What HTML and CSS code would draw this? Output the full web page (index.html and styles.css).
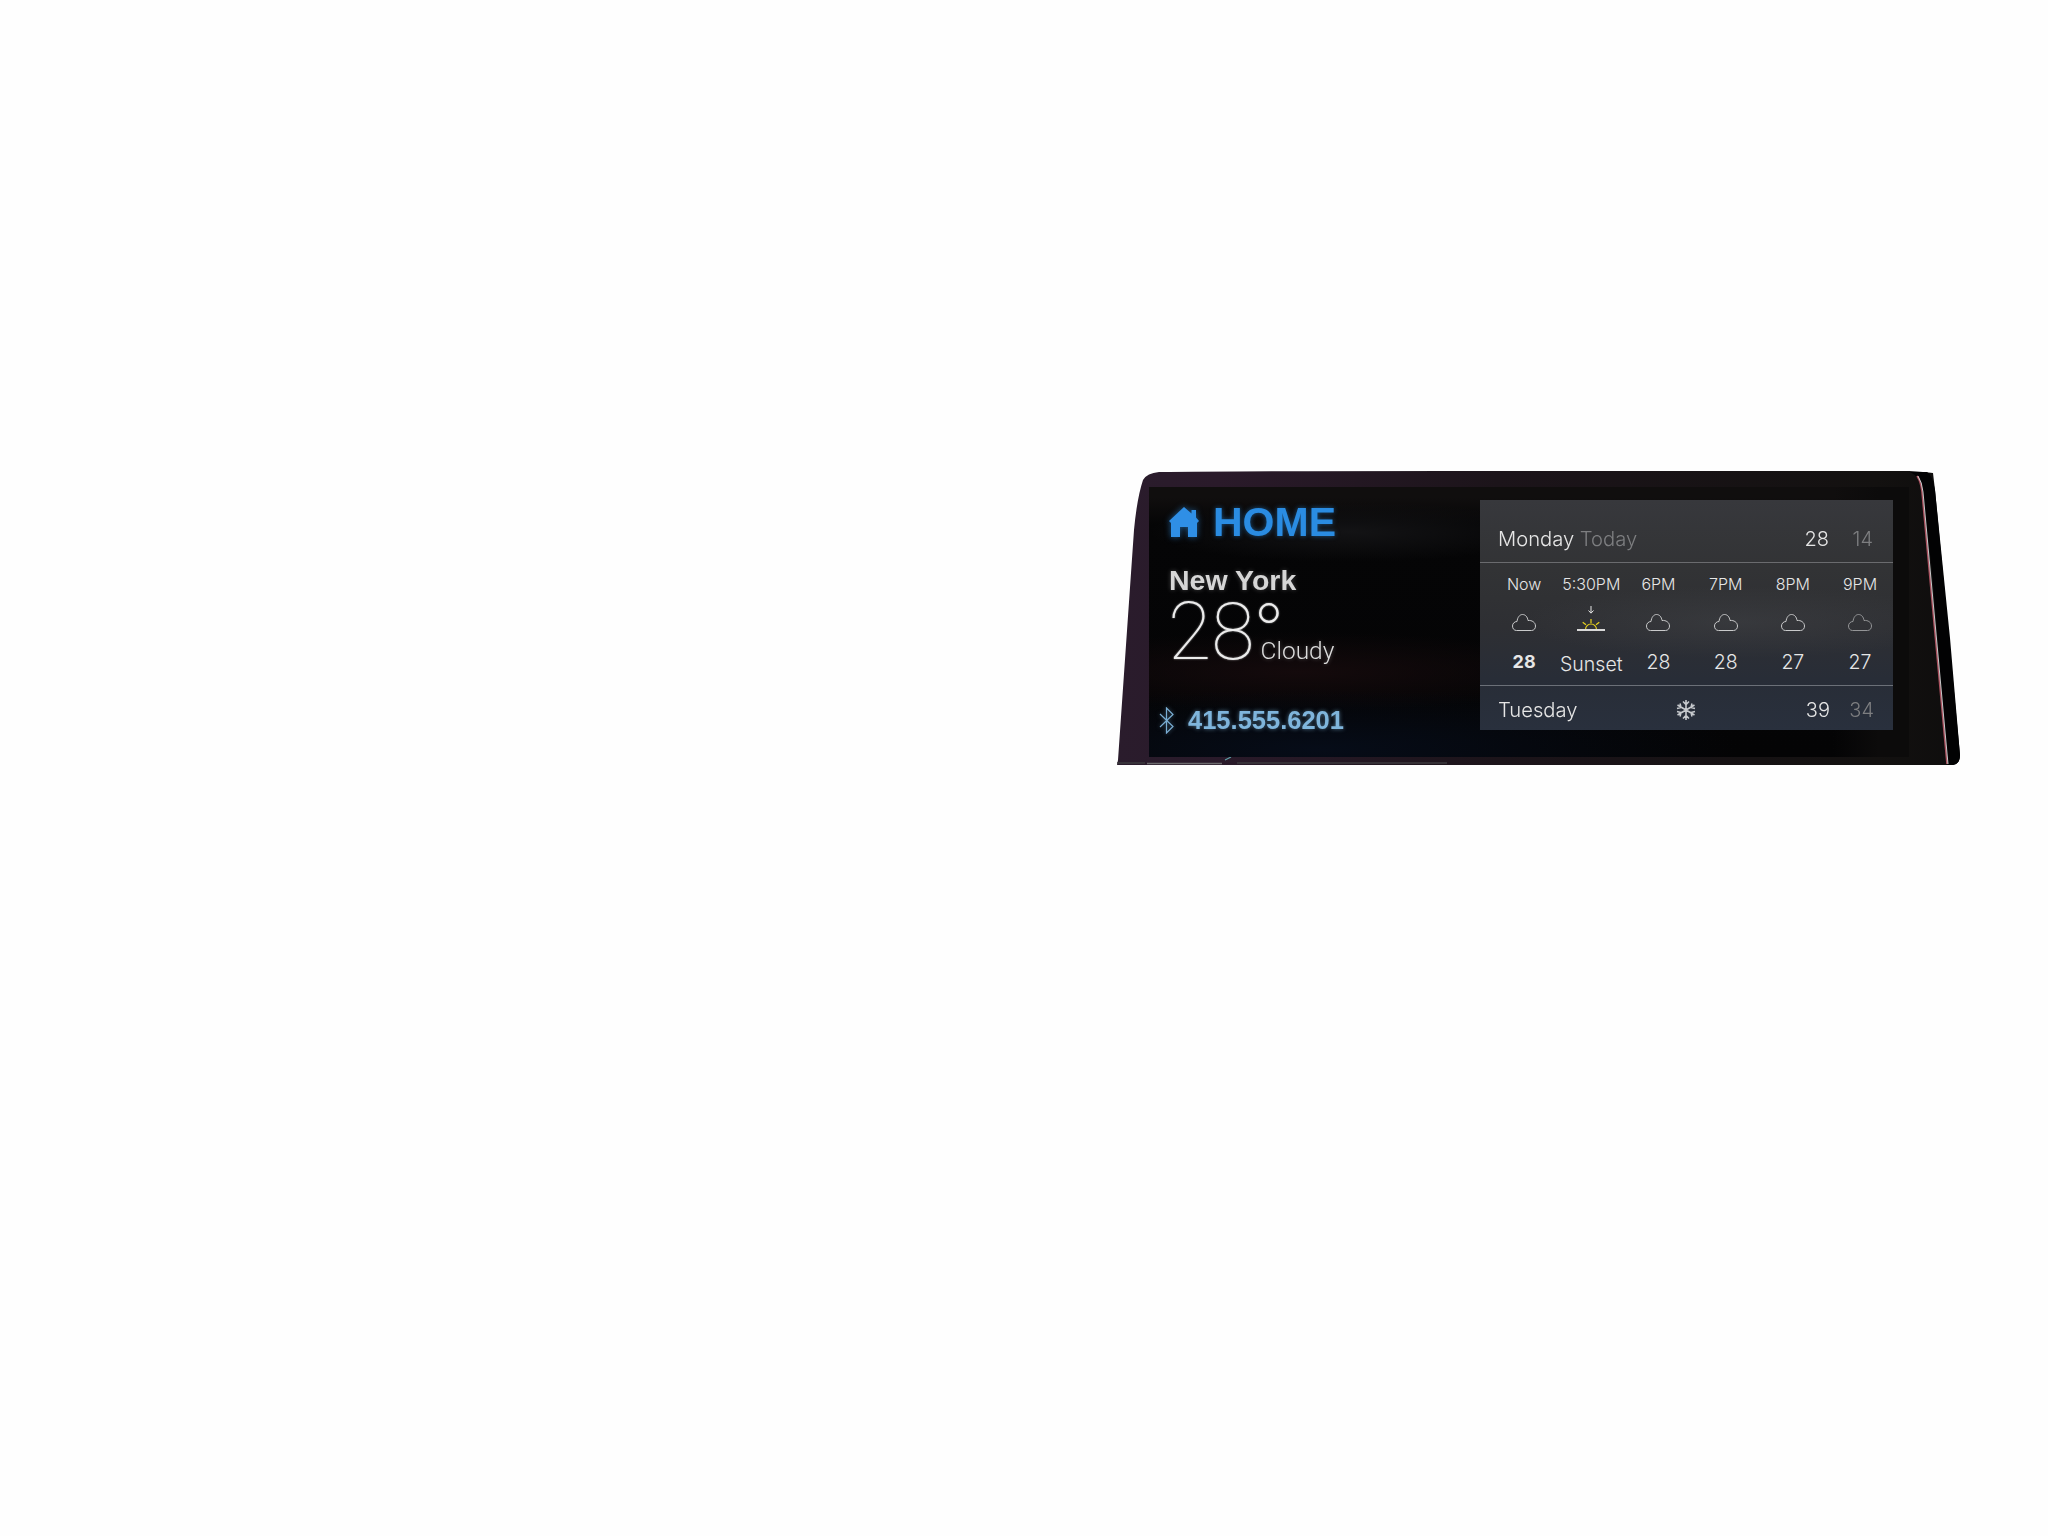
FILE: index.html
```html
<!DOCTYPE html>
<html lang="en">
<head>
<meta charset="utf-8">
<title>Home</title>
<link rel="stylesheet" href="styles.css">
</head>
<body>
<main class="device">
  <svg class="bezel" width="844" height="295" viewBox="0 0 844 295">
    <defs>
      <linearGradient id="frame" x1="0" y1="0" x2="1" y2="0">
        <stop offset="0" stop-color="#2a1c2c"/>
        <stop offset="0.12" stop-color="#2a1a2a"/>
        <stop offset="0.45" stop-color="#1c141a"/>
        <stop offset="0.9" stop-color="#131110"/>
        <stop offset="1" stop-color="#0e0d0d"/>
      </linearGradient>
    </defs>
    <path d="M0 295 L1 290 L17 60 Q20 28 26 10 Q30 3 42 2 Q120 1 330 1 L792 1 Q808 2 816 3 L818 20 L843 285 Q843 294 836 295 Z" fill="url(#frame)"/>
    <path d="M793 2 L810 2 Q815 4 818 20 L833 168 L843 285 Q843 294 836 295 L831 295 L815 100 L805 20 Q802 6 793 2 Z" fill="#020203"/>
    <path d="M800 6 Q804 12 805 22 L830 294" fill="none" stroke="#a8505e" stroke-width="1.6"/>
    <path d="M801 6 Q805 12 806 22 L831 294" fill="none" stroke="#eef4f4" stroke-width="0.8"/>
    <path d="M30 293.5 H105" stroke="#6b6a6c" stroke-width="1.4"/>
    <path d="M108 290 L114 287" stroke="#5fa0a8" stroke-width="1.2"/>
    <path d="M0 293 H28 M120 293 H330" stroke="#3d3a3e" stroke-width="1.6"/>
  </svg>
  <div class="screen">
    <section class="status">
      <div class="home-row">
        <svg class="home-icon" width="30" height="30" viewBox="0 0 30 30">
          <path d="M15 0 L22.5 6.5 V3 H27 V10.5 L30 14 L28 16 V30 H19 V20 H11 V30 H2 V16 L0 14 Z" fill="#2f8fe6"/>
        </svg>
        <h1 class="home-title">HOME</h1>
      </div>
      <h2 class="city">New York</h2>
      <div class="weather-now">
        <span class="big-temp">28</span>
        <div class="weather-side">
          <span class="degree">°</span>
          <span class="condition">Cloudy</span>
        </div>
      </div>
      <div class="phone-row">
        <svg class="bt-icon" width="18" height="27" viewBox="0 0 18 27">
          <path d="M2 7 L15 19.5 L8.5 26 V1 L15 7.5 L2 20" fill="none" stroke="#7aaed4" stroke-width="1.2"/>
        </svg>
        <span class="phone">415.555.6201</span>
      </div>
    </section>
    <section class="panel">
      <div class="day-row day-today">
        <div class="day-name">Monday <span class="dim">Today</span></div>
        <div class="temps"><span>28</span><span class="dim">14</span></div>
      </div>
      <div class="hours">
        <div class="hour"><span class="hour-label">Now</span><svg class="cloud" width="24" height="17" viewBox="0 0 24 17"><path d="M4.5 16.5 C2 16.5 .5 14.5 .5 12 C.5 9.5 2.5 7.5 5 7.5 C5.5 3.5 7.5 .5 10.5 .5 C13.5 .5 15.5 3 16 6.5 C20 6 23.5 8.5 23.5 12 C23.5 14.5 22 16.5 19.5 16.5 Z" fill="none" stroke="#c9cacb" stroke-width="1"/></svg><span class="hour-value strong">28</span></div>
        <div class="hour"><span class="hour-label">5:30PM</span><svg class="sunset" width="28" height="26" viewBox="0 0 28 26"><path d="M14 0 V7 M11.5 4.5 L14 7.2 L16.5 4.5" fill="none" stroke="#e6e6e6" stroke-width="1"/><path d="M8.5 23.5 A5.5 5.5 0 0 1 19.5 23.5 M14 13 V17 M5.7 16.3 L9 18.7 M22.3 16.3 L19 18.7" fill="none" stroke="#e8d21d" stroke-width="1.2"/><path d="M0 24 H28" stroke="#d8d8d8" stroke-width="2"/></svg><span class="hour-value">Sunset</span></div>
        <div class="hour"><span class="hour-label">6PM</span><svg class="cloud" width="24" height="17" viewBox="0 0 24 17"><path d="M4.5 16.5 C2 16.5 .5 14.5 .5 12 C.5 9.5 2.5 7.5 5 7.5 C5.5 3.5 7.5 .5 10.5 .5 C13.5 .5 15.5 3 16 6.5 C20 6 23.5 8.5 23.5 12 C23.5 14.5 22 16.5 19.5 16.5 Z" fill="none" stroke="#c9cacb" stroke-width="1"/></svg><span class="hour-value">28</span></div>
        <div class="hour"><span class="hour-label">7PM</span><svg class="cloud" width="24" height="17" viewBox="0 0 24 17"><path d="M4.5 16.5 C2 16.5 .5 14.5 .5 12 C.5 9.5 2.5 7.5 5 7.5 C5.5 3.5 7.5 .5 10.5 .5 C13.5 .5 15.5 3 16 6.5 C20 6 23.5 8.5 23.5 12 C23.5 14.5 22 16.5 19.5 16.5 Z" fill="none" stroke="#c9cacb" stroke-width="1"/></svg><span class="hour-value">28</span></div>
        <div class="hour"><span class="hour-label">8PM</span><svg class="cloud" width="24" height="17" viewBox="0 0 24 17"><path d="M4.5 16.5 C2 16.5 .5 14.5 .5 12 C.5 9.5 2.5 7.5 5 7.5 C5.5 3.5 7.5 .5 10.5 .5 C13.5 .5 15.5 3 16 6.5 C20 6 23.5 8.5 23.5 12 C23.5 14.5 22 16.5 19.5 16.5 Z" fill="none" stroke="#c9cacb" stroke-width="1"/></svg><span class="hour-value">27</span></div>
        <div class="hour"><span class="hour-label">9PM</span><svg class="cloud cloud-dim" width="24" height="17" viewBox="0 0 24 17"><path d="M4.5 16.5 C2 16.5 .5 14.5 .5 12 C.5 9.5 2.5 7.5 5 7.5 C5.5 3.5 7.5 .5 10.5 .5 C13.5 .5 15.5 3 16 6.5 C20 6 23.5 8.5 23.5 12 C23.5 14.5 22 16.5 19.5 16.5 Z" fill="none" stroke="#c9cacb" stroke-width="1"/></svg><span class="hour-value">27</span></div>
      </div>
      <div class="day-row day-next">
        <div class="day-name">Tuesday</div>
        <svg class="snow" width="20" height="22" viewBox="0 0 20 22">
          <path d="M10 1 V21 M1.5 6 L18.5 16 M18.5 6 L1.5 16 M7 2.5 L10 5.5 L13 2.5 M7 19.5 L10 16.5 L13 19.5 M1 9.5 L5 8.5 L4 4.5 M19 9.5 L15 8.5 L16 4.5 M1 12.5 L5 13.5 L4 17.5 M19 12.5 L15 13.5 L16 17.5" fill="none" stroke="#c6c9cd" stroke-width="1.6"/>
        </svg>
        <div class="temps"><span>39</span><span class="dim">34</span></div>
      </div>
    </section>
  </div>
</main>
</body>
</html>
```
FILE: styles.css
```css
* { box-sizing: border-box; }
html, body { margin: 0; padding: 0; }
body {
  background: #fefefe;
  width: 2048px;
  height: 1536px;
  overflow: hidden;
  font-family: "Liberation Sans", Arial, sans-serif;
}
.device {
  position: relative;
  width: 844px;
  height: 295px;
  margin: 0 0 0 1117px;
  padding: 17px 0 0 32px;
  top: 470px;
}
.bezel { position: absolute; left: 0; top: 0; }
.screen {
  position: relative;
  width: 760px;
  height: 270px;
  display: flex;
  justify-content: space-between;
  padding: 13px 16px 0 9px;
  background:
    radial-gradient(420px 60px at 170px 262px, #060c18 0%, rgba(6,12,24,0) 100%),
    radial-gradient(300px 40px at 150px 185px, #140a0c 0%, rgba(20,10,12,0) 100%),
    radial-gradient(200px 30px at 200px 45px, #131315 0%, rgba(19,19,21,0) 100%),
    linear-gradient(90deg, rgba(0,0,0,0) 90%, #0c0b0b 96%),
    linear-gradient(180deg, #100e0e 0%, #100e0e 4%, #050506 14%, #040405 100%);
}
.status { display: flex; flex-direction: column; width: 250px; filter: blur(.4px); }
.home-row { display: flex; align-items: center; gap: 14px; padding: 7px 0 0 11px; height: 37px; }
.home-icon { filter: drop-shadow(0 0 3px rgba(47,143,230,.6)); flex: none; }
.home-title {
  margin: 0;
  font-size: 41px;
  line-height: 36px;
  font-weight: 700;
  color: #2a8ce2;
  text-shadow: 0 0 5px rgba(42,140,226,.55);
}
.city {
  margin: 31px 0 0 11px;
  font-size: 28.5px;
  line-height: 24px;
  font-weight: 700;
  color: #d6d6d6;
  text-shadow: 0 0 5px rgba(255,255,255,.25);
}
.weather-now { display: flex; margin: 11px 0 0 10px; color: #ececec; }
.big-temp,
.degree {
  font-family: Roboto, sans-serif;
  font-weight: 100;
  font-size: 79px;
  text-shadow: 0 0 2px rgba(255,255,255,.6);
}
.big-temp { line-height: 58px; }
.weather-side { display: flex; flex-direction: column; margin-left: -2px; }
.degree { margin-top: 32px; font-size: 86px; line-height: 2px; height: 2px; }
.condition {
  padding-left: 8px;
  font-family: Roboto, sans-serif;
  font-weight: 300;
  font-size: 24.5px;
  line-height: 28px;
  color: #dcdcdc;
  text-shadow: 0 0 4px rgba(255,255,255,.3);
}
.phone-row { display: flex; align-items: center; gap: 12px; margin-top: 41px; height: 28px; }
.bt-icon { flex: none; filter: drop-shadow(0 0 2px rgba(122,174,212,.5)); }
.phone {
  font-size: 25.5px;
  line-height: 28px;
  font-weight: 700;
  color: #7fb5dc;
  text-shadow: 0 0 4px rgba(127,181,220,.6);
}
.panel {
  width: 413px;
  height: 230px;
  display: flex;
  flex-direction: column;
  color: #e6e6e6;
  font-family: Inter, "Liberation Sans", sans-serif;
  font-weight: 300;
  background:
    radial-gradient(220px 36px at 260px 122px, rgba(66,68,72,.45) 0%, rgba(66,68,72,0) 100%),
    linear-gradient(180deg, #37383c 0%, #323335 30%, #2e2f33 55%, #282d37 78%, #29303d 100%);
}
.day-row { display: flex; align-items: center; justify-content: space-between; padding-left: 18px; }
.day-today { height: 62px; padding-top: 16px; }
.day-next { position: relative; height: 44px; padding-top: 3px; }
.day-name { font-size: 20.2px; line-height: 26px; filter: blur(.3px); }
.dim { color: #7d7e80; }
.temps { display: flex; padding-right: 20px; font-size: 20px; line-height: 26px; filter: blur(.3px); }
.day-next .temps { padding-right: 19px; }
.temps span { width: 44px; text-align: right; }
.snow { position: absolute; left: 196px; top: 13px; }
.hours {
  display: grid;
  grid-template-columns: repeat(6, 67.2px);
  height: 125px;
  padding: 11px 0 0 10.5px;
  border-top: 1px solid #6a6b6e;
  border-bottom: 1px solid #6b7078;
}
.hour { display: flex; flex-direction: column; align-items: center; }
.hour-label { font-size: 16px; line-height: 20px; height: 20px; white-space: nowrap; }
.hour svg { margin-top: 12px; flex: none; }
.hour .cloud { margin-top: 20px; margin-bottom: -1px; height: 17px; }
.cloud-dim { opacity: .65; }
.hour-value { margin-top: 20px; font-size: 19.5px; line-height: 24px; }
.strong { font-weight: 700; font-size: 18px; }
```
